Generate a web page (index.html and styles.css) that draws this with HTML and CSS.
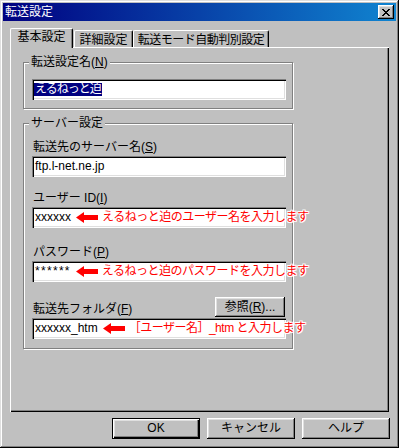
FILE: index.html
```html
<!DOCTYPE html>
<html lang="ja">

<head>
    <meta charset="UTF-8">
    <title>転送設定</title>
    <link rel="stylesheet" href="styles.css">
</head>

<body>
    <div class="window">
        <div class="titlebar">
            <span class="title">転送設定</span>
            <button class="close">
                <svg width="8" height="7" viewBox="0 0 8 7" shape-rendering="crispEdges">
                    <path d="M0 0h2v1h-2zM6 0h2v1h-2zM1 1h2v1h-2zM5 1h2v1h-2zM2 2h4v1h-4zM3 3h2v1h-2zM2 4h4v1h-4zM1 5h2v1h-2zM5 5h2v1h-2zM0 6h2v1h-2zM6 6h2v1h-2z" fill="#000"/>
                </svg>
            </button>
        </div>

        <div class="content">
            <div class="tabs">
                <div class="tab active">基本設定</div>
                <div class="tab tab-detail">詳細設定</div>
                <div class="tab tab-mode">転送モード自動判別設定</div>
            </div>

            <div class="panel">
                <div class="group group-name">
                    <div class="group-title">転送設定名(<u>N</u>)</div>
                    <div class="field"><span class="selected">えるねっと迫</span></div>
                </div>

                <div class="group group-server">
                    <div class="group-title">サーバー設定</div>

                    <div class="label">転送先のサーバー名(<u>S</u>)</div>
                    <div class="field">ftp.l-net.ne.jp</div>

                    <div class="label label-user">ユーザー ID(<u>I</u>)</div>
                    <div class="field">
                        <span class="value">xxxxxx</span>
                        <svg class="arrow" width="22" height="11" viewBox="0 0 22 11"><polygon points="0,5.5 8,0 8,3 22,3 22,8 8,8 8,11" fill="#f00"/></svg>
                        <span class="note">えるねっと迫のユーザー名を入力します</span>
                    </div>

                    <div class="label label-pass">パスワード(<u>P</u>)</div>
                    <div class="field">
                        <span class="value stars">******</span>
                        <svg class="arrow" width="22" height="11" viewBox="0 0 22 11"><polygon points="0,5.5 8,0 8,3 22,3 22,8 8,8 8,11" fill="#f00"/></svg>
                        <span class="note">えるねっと迫のパスワードを入力します</span>
                    </div>

                    <div class="label-row">
                        <div class="label">転送先フォルダ(<u>F</u>)</div>
                        <button class="btn browse">参照(<u>R</u>)...</button>
                    </div>
                    <div class="field">
                        <span class="value">xxxxxx_htm</span>
                        <svg class="arrow" width="22" height="11" viewBox="0 0 22 11"><polygon points="0,5.5 8,0 8,3 22,3 22,8 8,8 8,11" fill="#f00"/></svg>
                        <span class="note">［ユーザー名］_htm と入力します</span>
                    </div>
                </div>
            </div>

            <div class="actions">
                <button class="btn default">OK</button>
                <button class="btn">キャンセル</button>
                <button class="btn">ヘルプ</button>
            </div>
        </div>
    </div>
</body>

</html>
```

FILE: styles.css
```css
body {
    margin: 0;
    background-color: #c0c0c0;
    font-family: "Liberation Sans", "Noto Sans CJK JP", sans-serif;
    font-size: 12px;
    color: #000;
}

.window {
    width: 399px;
    height: 448px;
    box-sizing: border-box;
    padding: 3px;
    background-color: #c0c0c0;
    box-shadow: inset -1px -1px #000, inset 1px 1px #dfdfdf, inset -2px -2px #808080, inset 2px 2px #fff;
}

.titlebar {
    height: 18px;
    display: flex;
    align-items: center;
    justify-content: space-between;
    padding: 0 2px;
    background: linear-gradient(to right, #000080, #1084d0);
    color: #fff;
}

.title {
    line-height: 13px;
}

.close {
    width: 16px;
    height: 14px;
    padding: 0;
    border: 0;
    display: flex;
    align-items: center;
    justify-content: center;
    background-color: #c0c0c0;
    box-shadow: inset -1px -1px #000, inset 1px 1px #fff, inset -2px -2px #808080, inset 2px 2px #dfdfdf;
}

.content {
    padding: 7px 7px 0;
}

/* tab strip */
.tabs {
    display: flex;
    align-items: flex-end;
    height: 19px;
}

.tab {
    box-sizing: border-box;
    height: 17px;
    padding-top: 3px;
    line-height: 13px;
    text-align: center;
    white-space: nowrap;
    border-top: 1px solid #fff;
    border-left: 1px solid #fff;
    border-right: 1px solid #000;
    border-radius: 2px 2px 0 0;
    box-shadow: inset -1px 0 #808080;
}

.tab.active {
    position: relative;
    z-index: 1;
    width: 63px;
    height: 20px;
    padding-top: 2px;
    margin-bottom: -1px;
    background-color: #c0c0c0;
}

.tab-detail {
    width: 59px;
    margin-left: 1px;
}

.tab-mode {
    width: 136px;
    letter-spacing: -0.5px;
}

.panel {
    height: 365px;
    box-sizing: border-box;
    padding: 15px 0 0 13px;
    box-shadow: inset 1px 1px #fff, inset -1px -1px #000, inset -2px -2px #808080;
}

/* group boxes */
.group {
    position: relative;
    width: 270px;
    box-sizing: border-box;
    border: 1px solid #808080;
    box-shadow: 1px 1px #fff, inset 1px 1px #fff;
}

.group-name {
    padding: 16px 0 8px 8px;
}

.group-server {
    margin-top: 14px;
    padding: 17px 0 9px 8px;
}

.group-title {
    position: absolute;
    top: -7px;
    left: 5px;
    padding: 0 2px;
    line-height: 13px;
    background-color: #c0c0c0;
}

.label {
    height: 13px;
    line-height: 13px;
    margin: 0 0 2px 1px;
    white-space: nowrap;
}

.label-user {
    margin-top: 15px;
}

.label-pass {
    margin-top: 18px;
}

.label-row {
    width: 253px;
    height: 21px;
    margin-top: 15px;
    display: flex;
    align-items: flex-end;
    justify-content: space-between;
}

.field {
    width: 254px;
    height: 21px;
    box-sizing: border-box;
    display: flex;
    align-items: center;
    padding: 2px 0 2px 3px;
    line-height: 13px;
    white-space: nowrap;
    background-color: #fff;
    box-shadow: inset 1px 1px #808080, inset 2px 2px #000, inset -1px -1px #fff, inset -2px -2px #dfdfdf;
}

.selected {
    margin-left: -1px;
    padding: 0 1px;
    letter-spacing: -1px;
    background-color: #000080;
    color: #fff;
}

.stars {
    letter-spacing: 1.3px;
}

.arrow {
    flex-shrink: 0;
    margin: 0 4px 0 5px;
}

.note {
    color: #f00;
    letter-spacing: -0.5px;
    text-shadow: 1px 0 #fff, -1px 0 #fff, 0 1px #fff, 0 -1px #fff, 1px 1px #fff, -1px -1px #fff, 1px -1px #fff, -1px 1px #fff;
}

/* push buttons */
.btn {
    width: 88px;
    height: 21px;
    padding: 0;
    border: 0;
    font: inherit;
    line-height: 13px;
    color: #000;
    background-color: #c0c0c0;
    box-shadow: inset -1px -1px #000, inset 1px 1px #fff, inset -2px -2px #808080, inset 2px 2px #dfdfdf;
}

.browse {
    width: 70px;
    height: 20px;
    margin-bottom: 1px;
}

.default {
    box-shadow: inset 0 0 0 1px #000, inset 2px 2px #fff, inset -2px -2px #000, inset -3px -3px #808080, inset 3px 3px #dfdfdf;
}

.actions {
    display: flex;
    justify-content: flex-end;
    gap: 7px;
    margin-top: 6px;
    margin-right: -1px;
}
```
